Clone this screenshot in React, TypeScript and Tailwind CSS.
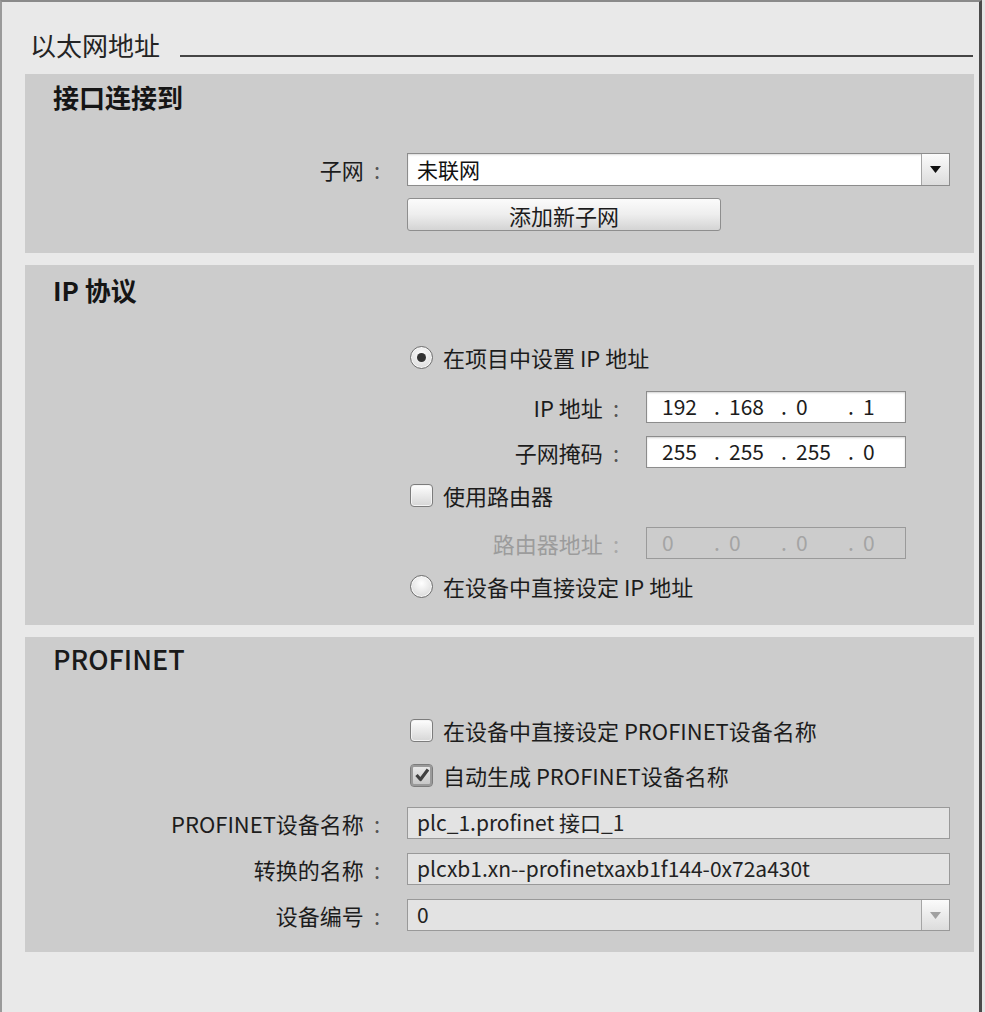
import { Fragment, type ReactNode } from 'react';

function Colon({ muted }: { muted?: boolean }) {
  return <span className={`ml-[10px] ${muted ? 'text-[#a8a8a8]' : 'text-[#555]'}`}>:</span>;
}

function Label({ children, width, muted }: { children: ReactNode; width: string; muted?: boolean }) {
  return (
    <div
      className={`${width} shrink-0 flex justify-end items-center pr-[27px] text-[22px] ${
        muted ? 'text-[#9c9c9c]' : 'text-[#1c1c1c]'
      }`}>
      {children}
      <Colon muted={muted} />
    </div>
  );
}

function Arrow({ muted }: { muted?: boolean }) {
  return (
    <div className="w-[28px] h-full shrink-0 border-l border-[#a5a5a5] bg-linear-to-b from-[#fbfbfb] to-[#dcdcdc] flex items-center justify-center">
      <svg width="11" height="7" viewBox="0 0 11 7">
        <polygon points="0,0 11,0 5.5,7" fill={muted ? '#a0a0a0' : '#111'} />
      </svg>
    </div>
  );
}

function Radio({ checked }: { checked?: boolean }) {
  return (
    <span className="w-[23px] h-[23px] shrink-0 rounded-full border border-[#6f6f6f] bg-[radial-gradient(circle_at_50%_35%,#ffffff,#d2d2d2)] shadow-[inset_0_0_0_1px_#f6f6f6] flex items-center justify-center">
      {checked && <span className="w-[9px] h-[9px] rounded-full bg-[#333]" />}
    </span>
  );
}

function Checkbox({ checked }: { checked?: boolean }) {
  return (
    <span
      className={`w-[23px] h-[23px] shrink-0 rounded-[4px] border border-[#7c7c7c] bg-linear-to-b flex items-center justify-center ${
        checked
          ? 'from-[#ececec] to-[#c4c4c4] shadow-[inset_0_0_0_2px_#9a9a9a]'
          : 'from-[#fefefe] to-[#d6d6d6] shadow-[inset_0_0_0_1px_#f4f4f4]'
      }`}>
      {checked && (
        <svg width="18" height="18" viewBox="0 0 18 18">
          <path d="M3.5 9 L7.5 13.5 L15 3.5" fill="none" stroke="#404040" strokeWidth="3.2" strokeLinejoin="round" />
        </svg>
      )}
    </span>
  );
}

function Option({ kind, checked, children, className = '' }: { kind: 'radio' | 'check'; checked?: boolean; children: ReactNode; className?: string }) {
  return (
    <div className={`h-[32px] flex items-center gap-[10px] text-[22px] text-[#1c1c1c] ${className}`}>
      {kind === 'radio' ? <Radio checked={checked} /> : <Checkbox checked={checked} />}
      <span>{children}</span>
    </div>
  );
}

function IpRow({ label, octets, muted, className = '' }: { label: string; octets: string[]; muted?: boolean; className?: string }) {
  return (
    <div className={`flex ${className}`}>
      <Label width="w-[236px]" muted={muted}>{label}</Label>
      <div
        className={`w-[260px] h-[32px] flex items-center pl-[15px] text-[21px] border ${
          muted
            ? 'border-[#9a9a9a] text-[#a4a4a4]'
            : 'border-[#8c8c8c] bg-white text-[#1c1c1c] shadow-[inset_0_1px_2px_rgba(0,0,0,0.18)]'
        }`}>
        {octets.map((o, i) => (
          <Fragment key={i}>
            <span className="w-[52px] shrink-0">{o}</span>
            {i < 3 && <span className="w-[15px] shrink-0">.</span>}
          </Fragment>
        ))}
      </div>
    </div>
  );
}

function ReadOnlyRow({ label, value, select, className = '' }: { label: ReactNode; value: string; select?: boolean; className?: string }) {
  return (
    <div className={`flex ${className}`}>
      <Label width="w-[382px]">{label}</Label>
      <div className="w-[543px] h-[32px] flex items-center border border-[#999] bg-[#e3e3e3] text-[21px] text-[#222]">
        <span className="flex-1 pl-[9px]">{value}</span>
        {select && <Arrow muted />}
      </div>
    </div>
  );
}

export default function App() {
  return (
    <div className="w-[985px] h-[1012px] bg-[#e4e4e4] font-['Noto_Sans_CJK_SC',sans-serif]">
      <div className="w-[982px] h-[1012px] bg-[#e9e9e9] border-t-2 border-l-2 border-t-[#8a8a8a] border-l-[#9a9a9a] border-r-[3px] border-r-[#4a4a4a] pl-[23px] pr-[5px]">
        {/* Title */}
        <div className="mt-[27px] h-[32px] flex">
          <span className="ml-[5px] text-[26px] leading-[32px] text-[#242424]">以太网地址</span>
          <div className="flex-1 ml-[20px] mr-[1px] self-end mb-[4px] h-[2px] bg-[#454545]" />
        </div>

        {/* 接口连接到 */}
        <section className="mt-[13px] h-[179px] bg-[#cccccc] pt-[7px]">
          <h2 className="pl-[28px] text-[26px] leading-[32px] font-bold text-[#151515]">接口连接到</h2>
          <div className="mt-[40px] flex">
            <Label width="w-[382px]">子网</Label>
            <div className="w-[543px] h-[33px] flex items-center border border-[#8c8c8c] bg-white shadow-[inset_0_1px_2px_rgba(0,0,0,0.15)] text-[21px] text-[#111]">
              <span className="flex-1 pl-[9px]">未联网</span>
              <Arrow />
            </div>
          </div>
          <div className="mt-[12px] pl-[382px]">
            <button className="w-[314px] h-[33px] rounded-[3px] border border-[#8e8e8e] bg-linear-to-b from-[#fbfbfb] via-[#eeeeee] to-[#d4d4d4] text-[22px] text-[#1c1c1c]">
              添加新子网
            </button>
          </div>
        </section>

        {/* IP 协议 */}
        <section className="mt-[12px] h-[360px] bg-[#cccccc] pt-[9px]">
          <h2 className="pl-[28px] text-[26px] leading-[32px] font-bold text-[#151515]">IP 协议</h2>
          <div className="pl-[385px] mt-[35px]">
            <Option kind="radio" checked>在项目中设置 IP 地址</Option>
            <IpRow className="mt-[18px]" label="IP 地址" octets={['192', '168', '0', '1']} />
            <IpRow className="mt-[12px]" label="子网掩码" octets={['255', '255', '255', '0']} />
            <Option kind="check" className="mt-[10px]">使用路由器</Option>
            <IpRow className="mt-[16px]" label="路由器地址" octets={['0', '0', '0', '0']} muted />
            <Option kind="radio" className="mt-[10px]">在设备中直接设定 IP 地址</Option>
          </div>
        </section>

        {/* PROFINET */}
        <section className="mt-[12px] h-[315px] bg-[#cccccc] pt-[6px]">
          <h2 className="pl-[28px] text-[27px] leading-[32px] font-medium text-[#1a1a1a]">PROFINET</h2>
          <div className="pl-[385px] mt-[39px]">
            <Option kind="check">在设备中直接设定 PROFINET设备名称</Option>
            <Option kind="check" checked className="mt-[13px]">自动生成 PROFINET设备名称</Option>
          </div>
          <ReadOnlyRow className="mt-[16px]" label="PROFINET设备名称" value="plc_1.profinet 接口_1" />
          <ReadOnlyRow className="mt-[13px]" label="转换的名称" value="plcxb1.xn--profinetxaxb1f144-0x72a430t" />
          <ReadOnlyRow className="mt-[13px]" label="设备编号" value="0" select />
        </section>
      </div>
    </div>
  );
}
